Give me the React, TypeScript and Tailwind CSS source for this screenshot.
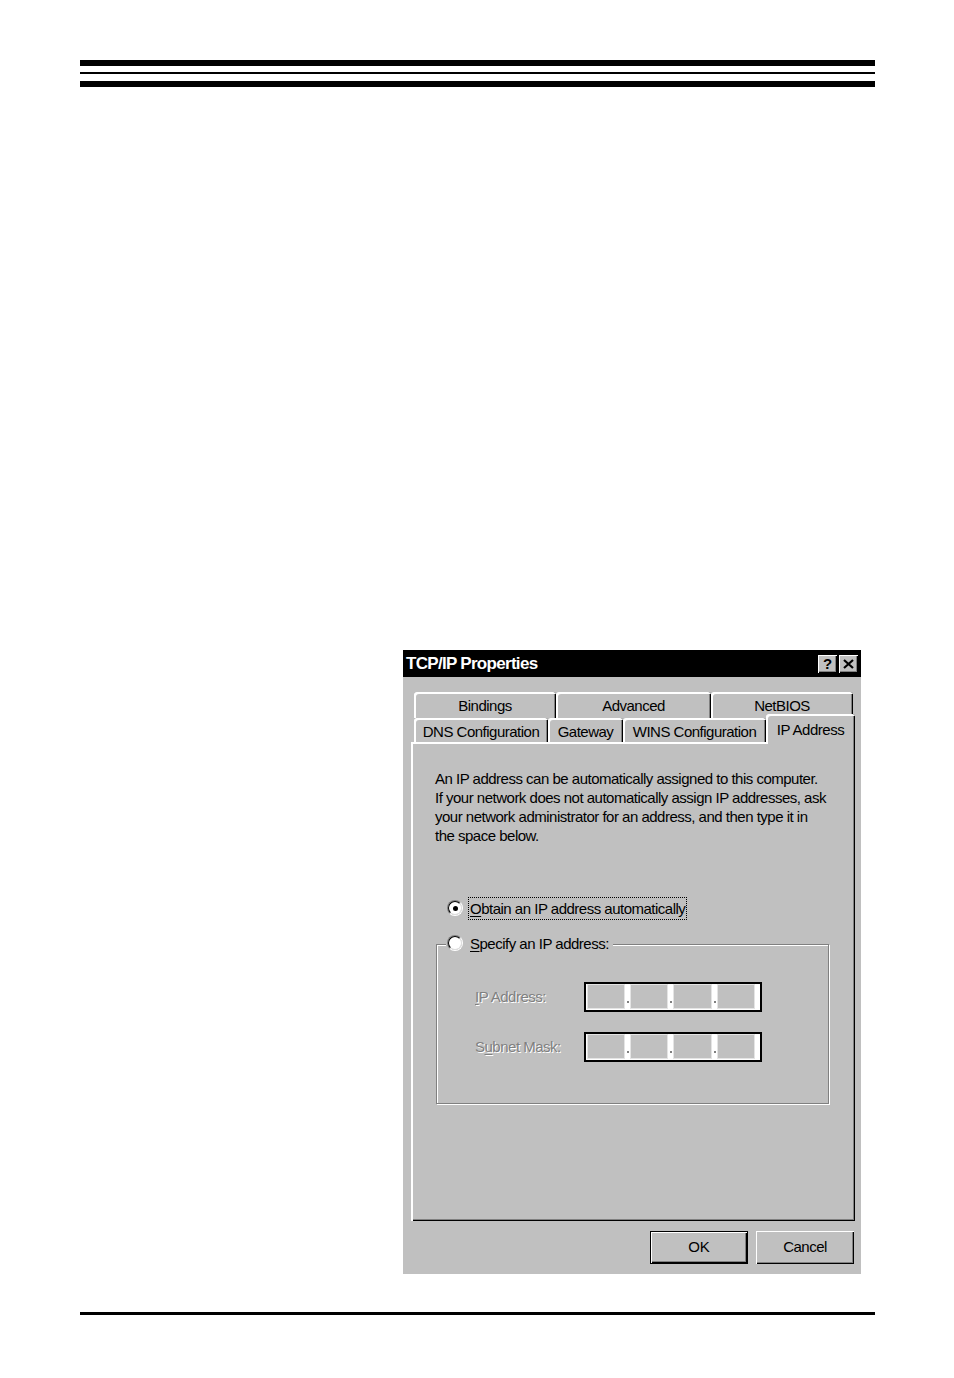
import React from "react";

const FONT = "font-['Liberation_Sans',Arial,sans-serif]";

function Tab({ label, w, h = "h-[26px]", active = false, pad = "" }: { label: string; w: string; h?: string; active?: boolean; pad?: string }) {
  return (
    <div
      className={`${w} ${h} ${pad} flex items-center justify-center rounded-t-[3px] bg-[#c0c0c0] text-[15px] tracking-[-0.5px] text-black shadow-[inset_2px_2px_0_#ffffff,inset_-1px_0_0_#000000,inset_-2px_0_0_#808080] ${
        active ? "relative z-10 -mb-[2px]" : ""
      }`}
    >
      <span className="leading-none">{label}</span>
    </div>
  );
}

function Radio({ checked }: { checked?: boolean }) {
  return (
    <div className="w-[16px] h-[16px] shrink-0 rounded-full border border-t-[#808080] border-l-[#808080] border-b-white border-r-white flex">
      <div className="flex-1 rounded-full border border-t-black border-l-black border-b-[#dfdfdf] border-r-[#dfdfdf] bg-white flex items-center justify-center">
        {checked && <div className="w-[5px] h-[5px] rounded-full bg-black" />}
      </div>
    </div>
  );
}

function IpField() {
  const Box = ({ w }: { w: string }) => (
    <div className={`${w} h-[25px] bg-[#c0c0c0] border border-[#e4e4e4]`} />
  );
  const Sep = () => (
    <div className="w-[5px] h-[25px] flex items-end justify-center pb-[6px]">
      <div className="w-[2px] h-[2px] bg-[#808080]" />
    </div>
  );
  return (
    <div className="w-[178px] h-[30px] border-2 border-black bg-white flex items-start pl-[1px]">
      <Box w="w-[38px]" />
      <Sep />
      <Box w="w-[38px]" />
      <Sep />
      <Box w="w-[39px]" />
      <Sep />
      <Box w="w-[38px]" />
    </div>
  );
}

const disabled = "text-[#808080] [text-shadow:1px_1px_0_#ffffff]";

export default function App() {
  return (
    <div className={`w-[954px] h-[1378px] bg-white ${FONT}`}>
      {/* header rules */}
      <div className="pt-[60px] pl-[80px]">
        <div className="w-[795px] h-[6px] bg-black" />
        <div className="w-[795px] h-[2px] bg-black mt-[6px]" />
        <div className="w-[795px] h-[6px] bg-black mt-[7px]" />
      </div>

      {/* dialog */}
      <div className="mt-[563px] ml-[403px] w-[458px] h-[624px] bg-[#c0c0c0] flex flex-col">
        {/* title bar */}
        <div className="h-[27px] bg-black flex items-center justify-between pl-[3px] pr-[3px]">
          <span className="text-white font-bold text-[17px] tracking-[-0.7px] leading-none">TCP/IP Properties</span>
          <div className="flex gap-[2px]">
            <div className="w-[19px] h-[18px] bg-[#c0c0c0] shadow-[inset_1px_1px_0_#ffffff,inset_-1px_-1px_0_#000000,inset_-2px_-2px_0_#808080] flex items-center justify-center">
              <span className="text-black font-bold text-[15px] leading-none">?</span>
            </div>
            <div className="w-[19px] h-[18px] bg-[#c0c0c0] shadow-[inset_1px_1px_0_#ffffff,inset_-1px_-1px_0_#000000,inset_-2px_-2px_0_#808080] flex items-center justify-center">
              <svg width="11" height="10" viewBox="0 0 11 10">
                <path d="M1 1 L10 9 M10 1 L1 9" stroke="#000" strokeWidth="2.2" fill="none" />
              </svg>
            </div>
          </div>
        </div>

        {/* tabs */}
        <div className="pt-[15px]">
          <div className="flex pl-[11px] h-[26px]">
            <Tab label="Bindings" w="w-[142px]" />
            <Tab label="Advanced" w="w-[155px]" />
            <Tab label="NetBIOS" w="w-[142px]" />
          </div>
          <div className="flex items-end pl-[11px] h-[24px]">
            <Tab label="DNS Configuration" w="w-[134px]" h="h-[24px]" pad="pt-[2px]" />
            <Tab label="Gateway" w="w-[75px]" h="h-[24px]" pad="pt-[2px]" />
            <Tab label="WINS Configuration" w="w-[143px]" h="h-[24px]" pad="pt-[2px]" />
            <Tab label="IP Address" w="w-[89px]" h="h-[30px]" active />
          </div>
        </div>

        {/* panel */}
        <div className="ml-[8px] w-[444px] h-[479px] shadow-[inset_2px_2px_0_#ffffff,inset_-1px_-1px_0_#000000,inset_-2px_-2px_0_#808080] pl-[24px] pt-[27px] text-black text-[15px] tracking-[-0.5px]">
          <div className="leading-[19px] whitespace-nowrap">
            <div>An IP address can be automatically assigned to this computer.</div>
            <div>If your network does not automatically assign IP addresses, ask</div>
            <div>your network administrator for an address, and then type it in</div>
            <div>the space below.</div>
          </div>

          <div className="mt-[51px] ml-[12px] h-[24px] flex items-center">
            <Radio checked />
            <div className="ml-[5px] border border-dotted border-black px-[1px] h-[23px] flex items-center leading-none">
              <span>
                <span className="underline underline-offset-2">O</span>btain an IP address automatically
              </span>
            </div>
          </div>

          {/* group box */}
          <div className="mt-[24px] ml-[1px] w-[393px] h-[160px] border border-[#808080] shadow-[1px_1px_0_#ffffff,inset_1px_1px_0_#ffffff]">
            <div className="-mt-[11px] ml-[9px] h-[18px] flex items-center">
              <div className="bg-[#c0c0c0] flex items-center px-[1px]">
                <Radio />
                <span className="ml-[7px] pr-[3px] leading-none">
                  <span className="underline underline-offset-2">S</span>pecify an IP address:
                </span>
              </div>
            </div>

            <div className="mt-[30px] pl-[38px] flex items-center h-[30px]">
              <div className={`w-[109px] ${disabled}`}>
                <span className="underline underline-offset-2">I</span>P Address:
              </div>
              <IpField />
            </div>
            <div className="mt-[20px] pl-[38px] flex items-center h-[30px]">
              <div className={`w-[109px] ${disabled}`}>
                S<span className="underline underline-offset-2">u</span>bnet Mask:
              </div>
              <IpField />
            </div>
          </div>
        </div>

        {/* buttons */}
        <div className="mt-[10px] flex justify-end gap-[8px] pr-[7px]">
          <div className="w-[98px] h-[33px] border border-black shadow-[inset_1px_1px_0_#ffffff,inset_-1px_-1px_0_#000000,inset_-2px_-2px_0_#808080] flex items-center justify-center text-[15px] text-black">
            OK
          </div>
          <div className="w-[98px] h-[33px] shadow-[inset_1px_1px_0_#ffffff,inset_-1px_-1px_0_#000000,inset_-2px_-2px_0_#808080] flex items-center justify-center text-[15px] tracking-[-0.5px] text-black">
            Cancel
          </div>
        </div>
      </div>

      {/* bottom rule */}
      <div className="mt-[38px] ml-[80px] w-[795px] h-[3px] bg-black" />
    </div>
  );
}
